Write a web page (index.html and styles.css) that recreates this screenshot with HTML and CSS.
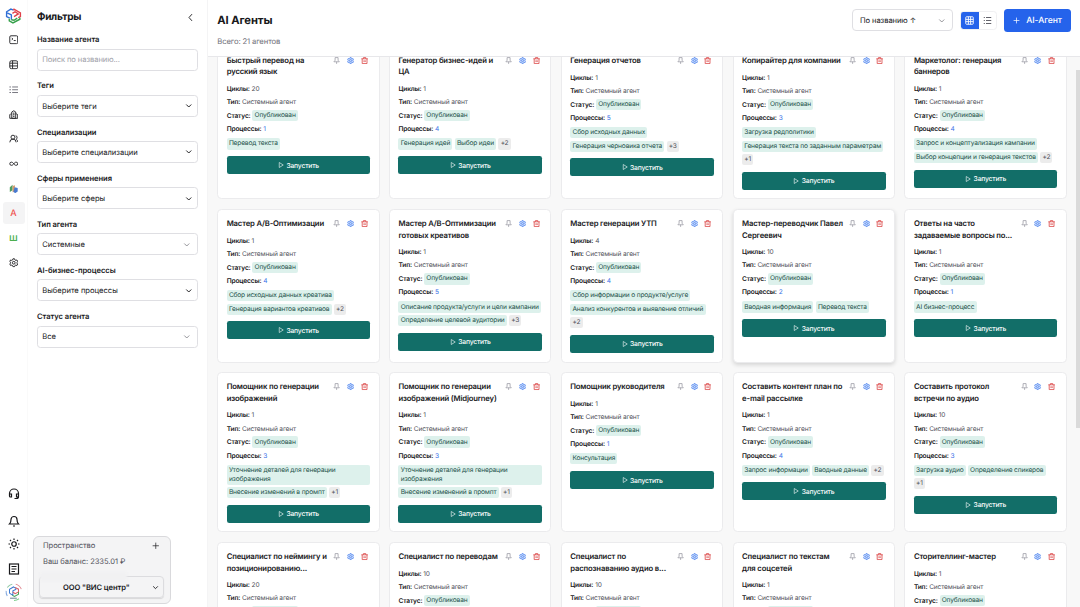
FILE: index.html
```html
<!DOCTYPE html>
<html lang="ru">

<head>
    <meta charset="UTF-8" />
    <meta name="viewport" content="width=device-width, initial-scale=1" />
    <title>AI Агенты</title>
    <link rel="stylesheet" href="styles.css">
</head>

<body>
    <svg class="sprite" viewBox="0 0 24 24">
        <symbol id="i-logo" viewBox="0 0 32 32">
            <path d="M9 21l-6-3V9l8-5 5 2" stroke="#2f6fd6" />
            <path d="M4 11l8 4v9" stroke="#2f6fd6" />
            <path d="M16 6l1-2 12 7v7l-4 2M14 12l5-3 6 4-8 5" stroke="#e0404a" />
            <path d="M8 22v4l7 4 13-7v-3M12 24l5 1 6-4" stroke="#35a04a" />
        </symbol>
        <symbol id="i-terminal" viewBox="0 0 24 24"><rect x="2" y="2" width="20" height="20" rx="3" /><path d="M7 8l3 2-3 2M12 14h5" /></symbol>
        <symbol id="i-table" viewBox="0 0 24 24"><rect x="2" y="2" width="20" height="20" rx="4" /><path d="M2 8h20M2 15h20M9 2v20" /></symbol>
        <symbol id="i-rows" viewBox="0 0 24 24"><path d="M1 5h4M8 5h15M1 12h4M8 12h15M1 19h4M8 19h15" /></symbol>
        <symbol id="i-building" viewBox="0 0 24 24"><path d="M7 21V5l5-3 5 3v16zM7 10H4l-2 2v9h20v-9l-2-2h-3M10 8h4M10 12h4M10 16h4" /></symbol>
        <symbol id="i-users" viewBox="0 0 24 24"><circle cx="10" cy="8" r="5" /><path d="M2 21a8 8 0 0 1 16 0M17 4a5 5 0 0 1 1 9c2 1 4 4 4 7" /></symbol>
        <symbol id="i-infinity" viewBox="0 0 24 24"><path d="M12 12c-2-3-4-4-6-4a4 4 0 0 0 0 8c2 0 4-1 6-4s4-4 6-4a4 4 0 0 1 0 8c-2 0-4-1-6-4z" /></symbol>
        <symbol id="i-gear" viewBox="0 0 24 24"><path d="M10 2h4l1 3 2 1 3-1 2 4-2 2v2l2 2-2 4-3-1-2 1-1 3h-4l-1-3-2-1-3 1-2-4 2-2v-2L2 9l2-4 3 1 2-1z" /><circle cx="12" cy="12" r="3.5" /></symbol>
        <symbol id="i-headset" viewBox="0 0 24 24"><path d="M3 15v-4a9 9 0 0 1 18 0v6a4 4 0 0 1-4 4h-4M3 12h4v6H5a2 2 0 0 1-2-2zM21 12h-4v6h2a2 2 0 0 0 2-2z" /></symbol>
        <symbol id="i-bell" viewBox="0 0 24 24"><path d="M3 18c2-2 3-4 3-9a6 6 0 0 1 12 0c0 5 1 7 3 9zM10 22h4" /></symbol>
        <symbol id="i-sun" viewBox="0 0 24 24"><circle cx="12" cy="12" r="4.5" /><path d="M12 1v3M12 20v3M1 12h3M20 12h3M4 4l2 2M18 18l2 2M4 20l2-2M18 6l2-2" /></symbol>
        <symbol id="i-doc" viewBox="0 0 24 24"><rect x="3" y="2" width="18" height="20" /><path d="M7 7h10M7 12h10M7 17h7" /></symbol>
        <symbol id="i-left" viewBox="0 0 24 24"><path d="M16 3l-8 9 8 9" /></symbol>
        <symbol id="i-down" viewBox="0 0 24 24"><path d="M4 8l8 8 8-8" /></symbol>
        <symbol id="i-plus" viewBox="0 0 24 24"><path d="M12 2v20M2 12h20" /></symbol>
        <symbol id="i-grid" viewBox="0 0 24 24"><rect x="2" y="2" width="20" height="20" rx="2" /><path d="M2 9h20M2 15h20M9 2v20M15 2v20" /></symbol>
        <symbol id="i-list" viewBox="0 0 24 24"><path d="M2 4h3M8 4h14M2 12h3M8 12h14M2 20h3M8 20h14" /></symbol>
        <symbol id="i-pin" viewBox="0 0 24 24"><path d="M7 2h10v9l4 5H3l4-5zM12 16v7" /></symbol>
        <symbol id="i-trash" viewBox="0 0 24 24"><path d="M1 6h22M8 6V2h8v4M4 6v16h16V6M10 11v6M14 11v6" /></symbol>
        <symbol id="i-play" viewBox="0 0 24 24"><path d="M5 2l16 10-16 10z" /></symbol>
    </svg>

    <div class="app">
        <nav class="rail">
            <svg class="logo"><use href="#i-logo" /></svg>
            <div class="rail-menu">
                <a class="rail-item"><svg><use href="#i-terminal" /></svg></a>
                <a class="rail-item"><svg><use href="#i-table" /></svg></a>
                <a class="rail-item"><svg class="soft"><use href="#i-rows" /></svg></a>
                <a class="rail-item"><svg><use href="#i-building" /></svg></a>
                <a class="rail-item"><svg><use href="#i-users" /></svg></a>
                <a class="rail-item"><svg><use href="#i-infinity" /></svg></a>
                <a class="rail-item">
                    <svg class="petals" viewBox="0 0 24 24">
                        <path d="M2 8l7-6v14l-7 4z" fill="#4f9d62" />
                        <path d="M9 5l6-2v15l-6 3z" fill="#d39a6b" />
                        <path d="M14 8l8 2v9l-6 4-5-3z" fill="#4779cf" />
                    </svg>
                </a>
                <a class="rail-item active">A</a>
                <a class="rail-item green">ш</a>
                <a class="rail-item"><svg><use href="#i-gear" /></svg></a>
            </div>
            <div class="rail-bottom">
                <svg><use href="#i-headset" /></svg>
                <svg><use href="#i-bell" /></svg>
                <svg><use href="#i-sun" /></svg>
                <svg><use href="#i-doc" /></svg>
                <svg class="avatar" viewBox="0 0 32 32">
                    <path d="M4 8a15 15 0 0 1 9-6" stroke="#8cc7a0" />
                    <path d="M19 2a15 15 0 0 1 10 9" stroke="#e08b93" />
                    <path d="M2 14a15 15 0 0 0 2 9" stroke="#83a9e0" />
                    <path d="M16 31a15 15 0 0 0 9-3" stroke="#7fd08f" />
                    <path d="M8 18v-7l7-4 5 3M8 18l6 4v-8l6-3" stroke="#3f7bd0" />
                    <path d="M18 8l6 3v5l-6 3-4-3" stroke="#d8606a" />
                    <path d="M13 22l4 2 7-4v-4" stroke="#46a75a" />
                    <path d="M9 27h12" stroke="#69808f" />
                </svg>
            </div>
        </nav>

        <aside class="filters">
            <div class="filters-head">
                <h2>Фильтры</h2>
                <svg class="collapse"><use href="#i-left" /></svg>
            </div>
            <div class="field">
                <label>Название агента</label>
                <div class="control placeholder">Поиск по названию...</div>
            </div>
            <div class="field">
                <label>Теги</label>
                <div class="control">Выберите теги<svg><use href="#i-down" /></svg></div>
            </div>
            <div class="field">
                <label>Специализации</label>
                <div class="control">Выберите специализации<svg><use href="#i-down" /></svg></div>
            </div>
            <div class="field">
                <label>Сферы применения</label>
                <div class="control">Выберите сферы<svg><use href="#i-down" /></svg></div>
            </div>
            <div class="field">
                <label>Тип агента</label>
                <div class="control select">Системные<svg><use href="#i-down" /></svg></div>
            </div>
            <div class="field">
                <label>AI-бизнес-процессы</label>
                <div class="control">Выберите процессы<svg><use href="#i-down" /></svg></div>
            </div>
            <div class="field">
                <label>Статус агента</label>
                <div class="control select">Все<svg><use href="#i-down" /></svg></div>
            </div>

            <div class="space">
                <div class="space-head">Пространство<svg><use href="#i-plus" /></svg></div>
                <div class="balance">Ваш баланс: 2335.01 ₽</div>
                <div class="space-select">
                    <span class="smudge"></span>
                    <b>ООО "ВИС центр"</b>
                    <svg><use href="#i-down" /></svg>
                </div>
            </div>
        </aside>

        <main class="main">
            <header class="topbar">
                <div>
                    <h1>AI Агенты</h1>
                    <p class="total">Всего: 21 агентов</p>
                </div>
                <div class="tools">
                    <div class="sort">По названию ↑<svg><use href="#i-down" /></svg></div>
                    <div class="view">
                        <span class="on"><svg><use href="#i-grid" /></svg></span>
                        <span><svg><use href="#i-list" /></svg></span>
                    </div>
                    <button class="add"><svg><use href="#i-plus" /></svg>AI-Агент</button>
                </div>
            </header>
            <div class="content">
                <div class="cards" id="cards"></div>
                <div class="scrollbar"></div>
            </div>
        </main>
    </div>

    <script src="app.js"></script>
</body>

</html>
```
FILE: styles.css
```css
* {
    box-sizing: border-box;
}

body {
    margin: 0;
    font-family: Inter, "Liberation Sans", sans-serif;
    font-size: 7.6px;
    text-rendering: geometricPrecision;
    color: #18181b;
    background: #fff;
}

h1, h2, h3, p {
    margin: 0;
}

button {
    text-rendering: inherit;
}

svg {
    fill: none;
    stroke: currentColor;
    stroke-width: 2.4;
    flex: none;
}

.sprite {
    display: none;
}

.app {
    display: flex;
    height: 100vh;
    overflow: hidden;
}

/* Left icon rail */
.rail {
    width: 28px;
    display: flex;
    flex-direction: column;
    align-items: center;
    padding-top: 7px;
    border-right: 1px solid #fafafa;
}

.logo {
    width: 17px;
    height: 17px;
    stroke-width: 2.6;
}

.rail-menu {
    display: flex;
    flex-direction: column;
    gap: 2.75px;
    margin-top: 5px;
}

.rail-item {
    width: 22px;
    height: 22px;
    border-radius: 3px;
    display: flex;
    align-items: center;
    justify-content: center;
    font-size: 9px;
    color: #27272a;
}

.rail-item svg {
    width: 9.5px;
    height: 9.5px;
}

.rail-item .soft {
    color: #71717a;
}

.rail-item .petals {
    stroke: none;
}

.rail-item.active {
    background: #f4f4f5;
    color: #ef5350;
    font-weight: 500;
}

.rail-item.green {
    color: #4caf50;
    font-size: 10.5px;
    font-weight: 500;
    padding-bottom: 2px;
}

.rail-bottom {
    margin-top: auto;
    display: flex;
    flex-direction: column;
    align-items: center;
    gap: 13px;
    padding-bottom: 6px;
}

.rail-bottom svg {
    width: 12px;
    height: 12px;
}

.rail-bottom svg:nth-child(1) {
    margin-bottom: 2px;
}

.rail-bottom svg:nth-child(2) {
    margin-bottom: -2px;
}

.rail-bottom .avatar {
    width: 18px;
    height: 18px;
    stroke-width: 1.8;
    margin-top: -5px;
}

/* Filters */
.filters {
    width: 180px;
    padding: 10px 9px 3px;
    display: flex;
    flex-direction: column;
    border-right: 1px solid #f4f4f5;
}

.filters-head {
    display: flex;
    justify-content: space-between;
    align-items: center;
    height: 14px;
    margin-bottom: 9.4px;
}

.filters-head h2 {
    font-size: 10.1px;
    font-weight: 700;
    letter-spacing: -0.3px;
}

.collapse {
    width: 9px;
    height: 9px;
    margin-right: 3px;
}

.field {
    margin-bottom: 8.5px;
}

.field label {
    display: block;
    font-size: 7.6px;
    font-weight: 600;
    letter-spacing: -0.05px;
    line-height: 13px;
    height: 15.6px;
}

.control {
    height: 22px;
    border: 1px solid #dfdfe3;
    border-radius: 3.4px;
    padding: 0 5px 0 4.3px;
    display: flex;
    align-items: center;
    justify-content: space-between;
    font-size: 7.6px;
}

.control svg {
    width: 7.5px;
    height: 7.5px;
    stroke-width: 3;
}

.control.select svg {
    stroke-width: 2.4;
    color: #71717a;
    margin-right: 1.5px;
}

.control.placeholder {
    color: #a1a1aa;
    letter-spacing: -0.1px;
}

.space {
    width: 138px;
    height: 68.5px;
    margin: auto 0 0 -4.5px;
    padding: 3px 5.5px;
    background: #f4f4f5;
    border: 1px solid #d9d9dc;
    border-radius: 6px;
    color: #52525b;
}

.space-head {
    display: flex;
    align-items: center;
    justify-content: space-between;
    height: 12px;
    padding: 0 4.5px 0 4px;
    letter-spacing: -0.08px;
}

.space-head svg {
    width: 7.5px;
    height: 7.5px;
    color: #27272a;
}

.balance {
    padding-left: 4px;
    line-height: 20px;
    letter-spacing: -0.08px;
}

.space-select {
    position: relative;
    height: 22px;
    margin-top: 4.5px;
    padding: 0 4.5px 0 14px;
    border: 1px solid #dcdcdf;
    border-radius: 4px;
    box-shadow: 0 1px 1px rgba(0, 0, 0, 0.12);
    display: flex;
    align-items: center;
    justify-content: space-between;
    color: #18181b;
}

.space-select b {
    font-weight: 600;
    margin-left: 9px;
    letter-spacing: -0.1px;
}

.space-select svg {
    width: 7px;
    height: 7px;
    stroke-width: 3;
}

.smudge {
    position: absolute;
    left: 0;
    top: -5px;
    width: 87px;
    height: 9px;
    background: #f1f1f2;
    filter: blur(1px);
}

/* Main column */
.main {
    flex: 1;
    min-width: 0;
    display: flex;
    flex-direction: column;
}

.topbar {
    height: 57px;
    padding: 9px 9px 0 9.3px;
    display: flex;
    justify-content: space-between;
    align-items: flex-start;
    background: #fff;
    border-bottom: 1px solid #e7e7ea;
    z-index: 1;
}

.topbar h1 {
    font-size: 11.2px;
    font-weight: 700;
    letter-spacing: -0.05px;
    line-height: 23px;
}

.total {
    margin-top: 4.4px;
    font-size: 7.7px;
    letter-spacing: -0.13px;
    line-height: 11px;
    color: #71717a;
}

.tools {
    display: flex;
    align-items: center;
}

.sort {
    width: 101px;
    height: 22px;
    padding: 0 7px;
    border: 1px solid #dfdfe3;
    border-radius: 4px;
    display: flex;
    align-items: center;
    justify-content: space-between;
    letter-spacing: -0.1px;
}

.sort svg {
    width: 7.5px;
    height: 7.5px;
    color: #71717a;
}

.view {
    margin: 0 7px;
    height: 19px;
    display: flex;
    border: 1px solid #f0f0f2;
    border-radius: 3.4px;
    overflow: hidden;
}

.view span {
    width: 17.5px;
    display: flex;
    align-items: center;
    justify-content: center;
    color: #52525b;
}

.view .on {
    background: #2563eb;
    color: #fff;
}

.view svg {
    width: 9px;
    height: 9px;
}

.add {
    width: 67px;
    height: 22.5px;
    border: none;
    border-radius: 3.5px;
    background: #2563eb;
    color: #fff;
    font: 500 8.6px Inter, sans-serif;
    letter-spacing: -0.1px;
    display: flex;
    align-items: center;
    justify-content: center;
    gap: 6px;
    padding: 1px 0 0;
}

.add svg {
    width: 7px;
    height: 7px;
}

.content {
    flex: 1;
    min-height: 0;
    position: relative;
    overflow: hidden;
    background: #f8f8f8;
}

.cards {
    display: grid;
    grid-template-columns: repeat(5, 162.3px);
    gap: 9.2px 9.5px;
    margin: -11.5px 0 0 9.3px;
}

.card {
    background: #fff;
    border: 1px solid #ebebed;
    border-radius: 4.5px;
    padding: 8.7px 8.4px;
}

.card.hovered {
    box-shadow: 0 2px 4px rgba(0, 0, 0, 0.14);
}

.card-head {
    display: flex;
    align-items: flex-start;
    justify-content: space-between;
    margin-bottom: 4.4px;
}

.card h3 {
    font-size: 7.7px;
    font-weight: 600;
    letter-spacing: -0.16px;
    line-height: 11.25px;
    white-space: nowrap;
}

.actions {
    display: flex;
    gap: 6.5px;
    padding: 2px 2.2px 0 0;
}

.actions svg {
    width: 7.2px;
    height: 7.2px;
    stroke-width: 2.8;
}

.pin {
    color: #a1a1aa;
}

.cog {
    color: #5b8def;
    fill: #c9dafb;
}

.trash {
    color: #dc4a4a;
}

.meta {
    height: 13.5px;
    display: flex;
    align-items: center;
    gap: 1.8px;
    font-size: 6.6px;
    letter-spacing: -0.15px;
    color: #52525b;
}

.meta b {
    font-weight: 600;
    color: #18181b;
}

.meta a {
    color: #3b73e8;
}

.status,
.tag,
.more {
    background: #ddf1ec;
    color: #24524b;
    border-radius: 2px;
    padding: 1.1px 2.2px;
    font-size: 6.6px;
    letter-spacing: -0.16px;
    line-height: 9px;
}

.tags {
    display: flex;
    flex-wrap: wrap;
    gap: 2.25px;
    margin: 2.25px 0 6.6px;
}

.more {
    background: #ececec;
    color: #52525b;
}

.run {
    width: 100%;
    height: 18px;
    border: none;
    border-radius: 2.3px;
    background: #126e68;
    color: #fff;
    font: 500 6.75px Inter, sans-serif;
    letter-spacing: -0.18px;
    display: flex;
    align-items: center;
    justify-content: center;
    gap: 2.5px;
    padding: 0;
}

.run svg {
    width: 6px;
    height: 6px;
}

.scrollbar {
    position: absolute;
    top: 13px;
    right: 0;
    width: 4.5px;
    height: 358px;
    background: #dadada;
}
```
FILE: app.js
```javascript
const agents = [
    { title: ['Быстрый перевод на', 'русский язык'], cycles: 20, count: 1, tags: ['Перевод текста'] },
    { title: ['Генератор бизнес-идей и', 'ЦА'], cycles: 1, count: 4, tags: ['Генерация идей', 'Выбор идеи'], more: 2 },
    { title: ['Генерация отчетов'], cycles: 1, count: 5, tags: ['Сбор исходных данных', 'Генерация черновика отчета'], more: 3 },
    { title: ['Копирайтер для компании'], cycles: 1, count: 3, tags: ['Загрузка редполитики', 'Генерация текста по заданным параметрам'], more: 1 },
    { title: ['Маркетолог: генерация', 'баннеров'], cycles: 1, count: 4, tags: ['Запрос и концептуализация кампании', 'Выбор концепции и генерация текстов'], more: 2 },

    { title: ['Мастер A/B-Оптимизации'], cycles: 1, count: 4, tags: ['Сбор исходных данных креатива', 'Генерация вариантов креативов'], more: 2 },
    { title: ['Мастер A/B-Оптимизации', 'готовых креативов'], cycles: 1, count: 5, tags: ['Описание продукта/услуги и цели кампании', 'Определение целевой аудитории'], more: 3 },
    { title: ['Мастер генерации УТП'], cycles: 4, count: 4, tags: ['Сбор информации о продукте/услуге', 'Анализ конкурентов и выявление отличий'], more: 2 },
    { title: ['Мастер-переводчик Павел', 'Сергеевич'], cycles: 10, count: 2, tags: ['Вводная информация', 'Перевод текста'], hovered: true },
    { title: ['Ответы на часто', 'задаваемые вопросы по...'], cycles: 1, count: 1, tags: ['AI бизнес-процесс'] },

    { title: ['Помощник по генерации', 'изображений'], cycles: 1, count: 3, tags: ['Уточнение деталей для генерации изображения', 'Внесение изменений в промпт'], more: 1 },
    { title: ['Помощник по генерации', 'изображений (Midjourney)'], cycles: 1, count: 3, tags: ['Уточнение деталей для генерации изображения', 'Внесение изменений в промпт'], more: 1 },
    { title: ['Помощник руководителя'], cycles: 1, count: 1, tags: ['Консультация'] },
    { title: ['Составить контент план по', 'e-mail рассылке'], cycles: 1, count: 4, tags: ['Запрос информации', 'Вводные данные'], more: 2 },
    { title: ['Составить протокол', 'встречи по аудио'], cycles: 10, count: 3, tags: ['Загрузка аудио', 'Определение спикеров'], more: 1 },

    { title: ['Специалист по неймингу и', 'позиционированию...'], cycles: 20, count: 3, tags: [] },
    { title: ['Специалист по переводам'], cycles: 10, count: 1, tags: [] },
    { title: ['Специалист по', 'распознаванию аудио в...'], cycles: 10, count: 1, tags: [] },
    { title: ['Специалист по текстам', 'для соцсетей'], cycles: 1, count: 3, tags: [] },
    { title: ['Сторителлинг-мастер'], cycles: 1, count: 3, tags: [] }
];

const icon = (name, cls = '') => `<svg class="${cls}"><use href="#i-${name}" /></svg>`;

document.getElementById('cards').innerHTML = agents.map(a => `
    <article class="card${a.hovered ? ' hovered' : ''}">
        <div class="card-head">
            <h3>${a.title.join('<br>')}</h3>
            <div class="actions">${icon('pin', 'pin')}${icon('gear', 'cog')}${icon('trash', 'trash')}</div>
        </div>
        <div class="meta"><b>Циклы:</b>${a.cycles}</div>
        <div class="meta"><b>Тип:</b>Системный агент</div>
        <div class="meta"><b>Статус:</b><span class="status">Опубликован</span></div>
        <div class="meta"><b>Процессы:</b><a>${a.count}</a></div>
        <div class="tags">
            ${a.tags.map(t => `<span class="tag">${t}</span>`).join('')}
            ${a.more ? `<span class="more">+${a.more}</span>` : ''}
        </div>
        <button class="run">${icon('play')}Запустить</button>
    </article>
`).join('');
```
